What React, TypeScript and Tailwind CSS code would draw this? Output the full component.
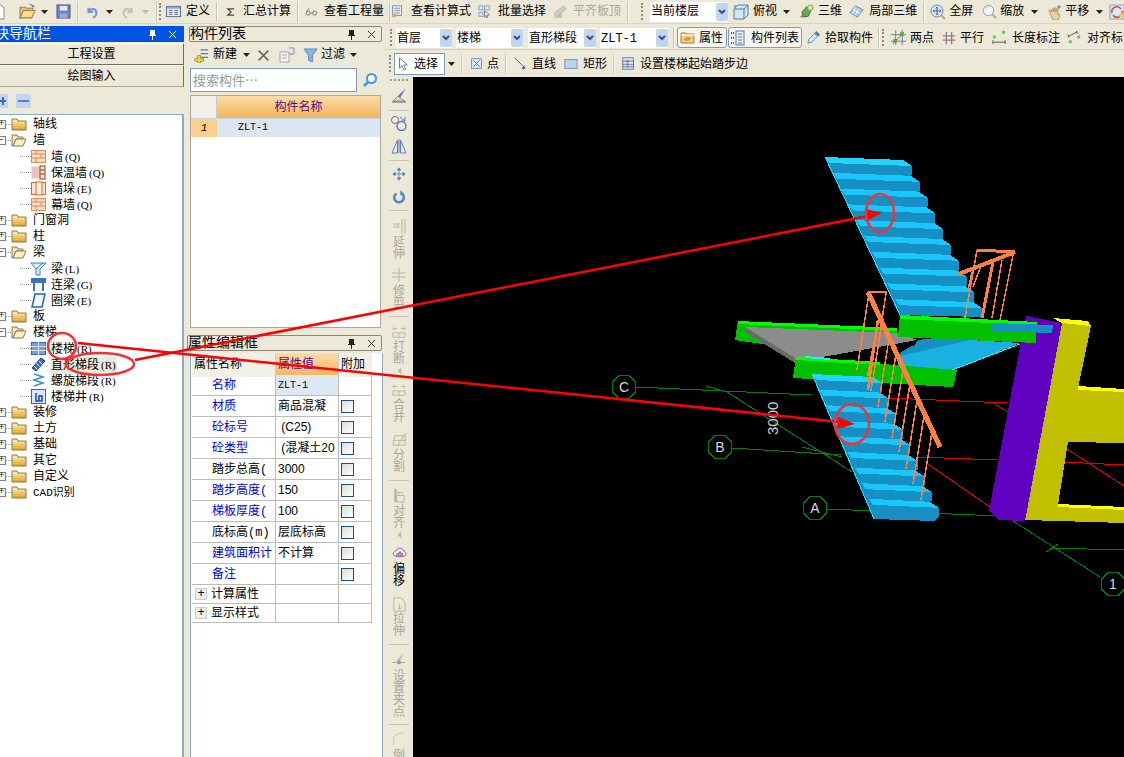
import React from 'react';

const F = "font-['Liberation_Mono','Noto_Sans_CJK_SC',monospace]";

// small toolbar pictures, all on a 16 grid
function Icon({ name, size = 16, className = '' }: { name: string; size?: number; className?: string }) {
  const p = { width: size, height: size, viewBox: '0 0 16 16', className: 'shrink-0 ' + className };
  switch (name) {
    case 'new':
      return <svg {...p}><path d="M3 1h7l3 3v11H3z" fill="#fff" stroke="#8a8a8a" /></svg>;
    case 'open':
      return <svg {...p}><path d="M1 4h5l1 1h6v2H5L2 14H1z" fill="#e8c878" stroke="#a08040" /><path d="M4 7h11l-3 7H1z" fill="#f6dc96" stroke="#a08040" /><path d="M10 1l4 2-2 1" fill="none" stroke="#4a8ad0" /></svg>;
    case 'save':
      return <svg {...p}><rect x="1" y="1" width="14" height="14" fill="#6f80c0" stroke="#4a5a98" /><rect x="4" y="2" width="8" height="5" fill="#e6e8f6" /><rect x="4" y="10" width="8" height="5" fill="#9aa6d8" /></svg>;
    case 'undo':
      return <svg {...p}><path d="M4 3v5h5M4 8c3-5 9-4 9 1 0 3-2 5-4 5" fill="none" stroke="#6e9ad8" strokeWidth="2.5" /></svg>;
    case 'redo':
      return <svg {...p}><path d="M12 3v5H7M12 8C9 3 3 4 3 9c0 3 2 5 4 5" fill="none" stroke="#c4c4ba" strokeWidth="2.5" /></svg>;
    case 'define':
      return <svg {...p}><rect x="0.5" y="2.5" width="15" height="11" fill="#e6ecf8" stroke="#4a6898" /><rect x="1" y="3" width="14" height="2" fill="#8aa6d0" /><path d="M3 7h4M3 9h4M3 11h4M9 7h4M9 9h4M9 11h4" stroke="#5a6a88" /></svg>;
    case 'sum':
      return <svg {...p}><path d="M13 3H3l5 5-5 5h10" fill="none" stroke="#444" strokeWidth="2" /></svg>;
    case 'glasses':
      return <svg {...p}><circle cx="4" cy="10" r="2.5" fill="none" stroke="#666" /><circle cx="12" cy="10" r="2.5" fill="none" stroke="#666" /><path d="M6.5 10h3M2 8l3-4" stroke="#666" fill="none" /></svg>;
    case 'formula':
      return <svg {...p}><rect x="2" y="1" width="11" height="12" fill="#e8eefa" stroke="#6a80a8" /><path d="M4 4h7M4 7h7M4 10h7" stroke="#6a80a8" /><rect x="1" y="11" width="5" height="4" fill="#e8a850" /></svg>;
    case 'batch':
      return <svg {...p}><path d="M1 1h5v5H1zM1 9h5v5H1zM8 1h6v5H8z" fill="#dde6f4" stroke="#7a94b8" /><path d="M8 7l6 5-3 .5 1 3-1.5.5-1-3-1.5 2z" fill="#fff" stroke="#666" /></svg>;
    case 'flat':
      return <svg {...p}><path d="M2 9l9-7 3 3-5 4v5H2z" fill="#cfcdc0" stroke="#bbb9ac" /><path d="M5 11h3v3H5z" fill="#bbb9ac" /></svg>;
    case 'cube':
      return <svg {...p}><path d="M1 5l4-4h10v10l-4 4H1z" fill="#cfe6f4" stroke="#5a7a98" /><path d="M1 5h10v10M11 5l4-4" fill="none" stroke="#5a7a98" /><path d="M1 1l4 0-4 4z" fill="#7ab0d8" /></svg>;
    case 'd3':
      return <svg {...p}><path d="M3 9l5-6 5 3-3 7-5 1z" fill="#58b060" stroke="#307038" /><circle cx="12" cy="4" r="3" fill="#d8e4a0" stroke="#909850" /><path d="M2 14l4-3" stroke="#c06040" strokeWidth="2" /></svg>;
    case 'part3d':
      return <svg {...p}><path d="M1 9l6-7 8 4-6 8z" fill="#a8c8e8" stroke="#6a90b8" /><path d="M4 6l8 4M7 3.5l-3 7M10 5l-3 7" stroke="#fff" /></svg>;
    case 'full':
      return <svg {...p}><circle cx="7" cy="7" r="6" fill="#dce6f6" stroke="#6a8ab8" /><path d="M7 3v8M3 7h8M7 3L6 4.500M7 3l1 1.500M7 11l-1-1.500M7 11l1-1.500M3 7l1.500-1M3 7l1.500 1M11 7l-1.500-1M11 7l-1.500 1" stroke="#4a68a8" fill="none" /><path d="M11 11l4 4" stroke="#d8a050" strokeWidth="2" /></svg>;
    case 'zoom':
      return <svg {...p}><circle cx="7" cy="7" r="5.500" fill="#f2f6fc" stroke="#8098b8" /><path d="M11 11l4 4" stroke="#c8a060" strokeWidth="2" /><path d="M4 5c1-2 3-2 4-2" stroke="#bcd0e8" fill="none" /></svg>;
    case 'hand':
      return <svg {...p}><path d="M3 9l-1-3 2 0 1 2V5h2v3-4h2v4-3h2v6l1-1 1 1-2 5H6z" fill="#e8d0a0" stroke="#b09868" /><path d="M12 1v4M10 3h4" stroke="#777" /></svg>;
    case 'orbit':
      return <svg {...p}><rect x="1" y="1" width="14" height="14" fill="#d8e8f4" stroke="#8aa8c0" /><path d="M3 9a5 5 0 0 1 9-4M13 7a5 5 0 0 1-9 4" fill="none" stroke="#e04838" strokeWidth="1.500" /><path d="M9 12l4-4 1 6z" fill="#e8d060" /></svg>;
    case 'attr':
      return <svg {...p}><path d="M1 3h5l1 1h7v9H1z" fill="#f2d080" stroke="#a08040" /><path d="M3 10l4-3 5 1-4 3z" fill="#c8a030" /><path d="M1 5h14" stroke="#fff" /></svg>;
    case 'list':
      return <svg {...p}><rect x="6" y="1" width="8" height="14" fill="#e8f0fa" stroke="#5a78a8" /><path d="M8 4h4M8 7h4M8 10h4M8 13h4" stroke="#5a78a8" /><path d="M1 3h3M1 8h3M1 13h3" stroke="#555" strokeWidth="2" strokeDasharray="1 1" /></svg>;
    case 'picker':
      return <svg {...p}><path d="M2 14l1-4 6-6 3 3-6 6z" fill="#dcecfa" stroke="#5a84b8" /><path d="M9 3l2-2 4 4-2 2z" fill="#4878b8" /></svg>;
    case 'two':
      return <svg {...p}><path d="M5 0v16M12 0v16M0 5h16M0 12h16" stroke="#6a7ab0" /><path d="M2 15L14 2" stroke="#e04040" /><rect x="9.500" y="2.500" width="4" height="4" fill="#50b050" /><rect x="2.500" y="9.500" width="4" height="4" fill="#50b050" /></svg>;
    case 'parallel':
      return <svg {...p}><path d="M5 1v14M11 1v14" stroke="#7080b0" strokeWidth="1.500" /><path d="M1 5.500h14M1 10.500h14" stroke="#c06868" strokeWidth="1.500" /></svg>;
    case 'len':
      return <svg {...p}><rect x="11" y="1" width="3" height="3" fill="#60c060" /><rect x="1" y="6" width="3" height="3" fill="#60c060" /><path d="M1 11v4M14 11v4M1 13h13" stroke="#555" /></svg>;
    case 'align':
      return <svg {...p}><rect x="11" y="6" width="3" height="3" fill="#60c060" /><rect x="2" y="11" width="3" height="3" fill="#60c060" /><path d="M1 7l10-5M1 5l1 3M10 1l1 3" stroke="#555" fill="none" /></svg>;
    case 'cursor':
      return <svg {...p}><path d="M4 1v12l3-3 2 5 2-1-2-5h4z" fill="#fff" stroke="#5a6a90" /></svg>;
    case 'point':
      return <svg {...p}><rect x="2" y="2" width="12" height="12" fill="#e0e4f4" stroke="#7080b0" /><path d="M4 4l8 8M12 4l-8 8" stroke="#d04040" /></svg>;
    case 'line':
      return <svg {...p}><path d="M1 1l12 12" stroke="#4a6a98" strokeWidth="1.200" /><path d="M9 14l5 1-1-5z" fill="#4a6a98" /></svg>;
    case 'rect':
      return <svg {...p}><rect x="1" y="3" width="14" height="10" fill="#bcd2f0" stroke="#6a88b8" /></svg>;
    case 'step':
      return <svg {...p}><rect x="1" y="1" width="13" height="14" fill="#dce8f8" stroke="#4a68a0" /><path d="M1 5h13M1 9h13M1 12h13" stroke="#4a68a0" /><path d="M7 13V4M5 6l2-2 2 2" fill="none" stroke="#d04030" /></svg>;
    case 'plusdoc':
      return <svg {...p}><path d="M7 2h8M7 6h8M7 10h8" stroke="#5a7ca8" strokeWidth="1.500" /><path d="M1 11h3V8h3v3h3v3H7v2H4v-2H1z" fill="#e8d060" stroke="#b09830" /></svg>;
    case 'x':
      return <svg {...p}><path d="M2 2l12 12M14 2L2 14" stroke="#6a6a6a" strokeWidth="2" /></svg>;
    case 'copy':
      return <svg {...p}><rect x="1" y="5" width="9" height="10" fill="#f4f4ee" stroke="#a8a8a8" /><path d="M3 8h5M3 11h5" stroke="#a8a8c8" /><path d="M10 1h5v6h-3M12 7l-2 0" stroke="#7090c0" fill="none" /></svg>;
    case 'funnel':
      return <svg {...p}><path d="M1 1h14L10 8v7l-4-2V8z" fill="#8ab4e8" stroke="#5a84b8" /></svg>;
    case 'search':
      return <svg {...p}><circle cx="9.500" cy="6.500" r="4.500" fill="#fff" stroke="#3a9ae0" strokeWidth="2" /><path d="M6 10l-4 4" stroke="#3a9ae0" strokeWidth="2.500" /></svg>;
    case 'brush':
      return <svg {...p}><path d="M15 1L7 9l2 2z" fill="#5a78b0" /><path d="M7 9l-5 5h12l-5-3z" fill="#e8d8c8" stroke="#a8907a" /><path d="M1 15h14" stroke="#4a68a0" /></svg>;
    case 'circles':
      return <svg {...p}><circle cx="4" cy="5" r="3.500" fill="#f4f4f4" stroke="#667" /><circle cx="10.500" cy="11" r="4.500" fill="none" stroke="#5a80b0" strokeWidth="1.500" /><path d="M9 2l5 4M14 2v4h-4" stroke="#5a80b0" fill="none" /></svg>;
    case 'mirror':
      return <svg {...p}><path d="M1 15L6.500 2v13zM15 15L9.500 2v13z" fill="none" stroke="#5a80c0" /><path d="M8 1v14" stroke="#5a80c0" /></svg>;
    case 'move':
      return <svg {...p}><path d="M8 1v14M1 8h14M8 1L6 3.500h4zM8 15l-2-2.500h4zM1 8l2.500-2v4zM15 8l-2.500-2v4z" fill="#5a84c0" stroke="#5a84c0" /></svg>;
    case 'rotate':
      return <svg {...p}><path d="M5 4a5.500 5.500 0 1 0 6 0" fill="none" stroke="#5a84d0" strokeWidth="3" /><path d="M10 0l-1 6 5-1z" fill="#5a84d0" /></svg>;
    case 'extend':
      return <svg {...p}><path d="M11 1v14M14 1v14M2 6h7M2 9h7" stroke="#b4b2a6" /><rect x="5" y="6" width="3" height="3" fill="#ccc" /></svg>;
    case 'trim':
      return <svg {...p}><path d="M8 1v14M1 6h14M1 10h14" stroke="#b4b2a6" /></svg>;
    case 'break':
      return <svg {...p}><path d="M1 9h14M1 14h14M1 9v5M15 9v5M8 9v5" stroke="#b4b2a6" fill="none" /><path d="M1 4h5M10 4h5M3 2L1 4l2 2M13 2l2 2-2 2" stroke="#b4b2a6" fill="none" /></svg>;
    case 'split':
      return <svg {...p}><path d="M1 14L3 4h11v10z" fill="none" stroke="#b4b2a6" /><path d="M1 9h13M15 1L6 14" stroke="#b4b2a6" /></svg>;
    case 'alignv':
      return <svg {...p}><path d="M3 1v14M13 15H5V8h8zM6 5h6M6 5l2-2M6 5l2 2" stroke="#b4b2a6" fill="none" /><rect x="3" y="1" width="2" height="14" fill="#b4b2a6" /></svg>;
    case 'offset':
      return <svg {...p}><path d="M2 11c-2-3 1-5 3-5 0-3 6-4 7 0 2 0 4 3 2 5-1 2-11 2-12 0z" fill="#f0eef8" stroke="#4a68c0" /><path d="M5 11c-1-2 1-2 2-2 0-2 3-2 3 0 2 0 2 1 1 2z" fill="#f09090" stroke="#d05050" /></svg>;
    case 'stretch':
      return <svg {...p}><path d="M2 1h8l4 5v9H2z" fill="none" stroke="#b4b2a6" /><path d="M8 7v6M6 11l2 2 2-2" stroke="#b4b2a6" fill="none" /></svg>;
    case 'grip':
      return <svg {...p}><path d="M14 1L6 9l2 2z" fill="#b4b2a6" /><path d="M1 12h5M10 12h5" stroke="#999" /><rect x="6" y="10" width="4" height="4" fill="#999" /></svg>;
    case 'corner':
      return <svg {...p}><path d="M2 15V7c0-3 3-5 12-6" fill="none" stroke="#c4c2b6" /></svg>;
    default:
      return <svg {...p} />;
  }
}

function Sep({ className = '' }: { className?: string }) {
  return <div className={'w-[2px] h-[20px] shrink-0 border-l border-[#c8c5b2] bg-white/60 ' + className} />;
}

function Grip({ className = '' }: { className?: string }) {
  return <div className={'w-[2px] h-[17px] shrink-0 border-l-2 border-dotted border-[#8a8a80] ' + className} />;
}

function Caret({ className = '', gray = false }: { className?: string; gray?: boolean }) {
  return (
    <svg width="7" height="4" viewBox="0 0 7 4" className={'shrink-0 ' + className}>
      <path d="M0 0h7L3.500 4z" fill={gray ? '#b8b6aa' : '#222'} />
    </svg>
  );
}

function Tool({ icon, label, size = 16, className = '', gap = 'gap-[5px]', gray = false }: { icon: string; label: string; size?: number; className?: string; gap?: string; gray?: boolean }) {
  return (
    <div className={'flex items-center shrink-0 ' + gap + ' ' + className}>
      <Icon name={icon} size={size} />
      <span className={'whitespace-nowrap ' + (gray ? 'text-[#a8a69a]' : 'text-black')}>{label}</span>
    </div>
  );
}

function Combo({ label, className = '' }: { label: string; className?: string }) {
  return (
    <div className={'h-[20px] shrink-0 bg-white flex items-center justify-between pl-[1px] ' + className}>
      <span className="whitespace-nowrap">{label}</span>
      <div className="w-[12px] h-[18px] bg-[#c3d4f2] rounded-[2px] flex items-center justify-center">
        <svg width="8" height="6" viewBox="0 0 8 6"><path d="M1 1l3 3 3-3" fill="none" stroke="#33517f" strokeWidth="2" /></svg>
      </div>
    </div>
  );
}

function TopBar() {
  return (
    <div className="h-[24px] shrink-0 flex items-center overflow-hidden border-b border-[#d8d5c4]">
      <Icon name="new" className="-ml-[9px]" />
      <Icon name="open" size={17} className="ml-[12px]" />
      <Caret className="ml-[5px]" />
      <Icon name="save" size={15} className="ml-[8px]" />
      <Sep className="ml-[6px]" />
      <Icon name="undo" size={14} className="ml-[6px]" />
      <Caret className="ml-[7px]" />
      <Icon name="redo" size={14} className="ml-[8px]" />
      <Caret gray className="ml-[7px]" />
      <Sep className="ml-[7px]" />
      <Grip className="ml-[1px]" />
      <Tool icon="define" label="定义" size={15} className="ml-[5px]" />
      <Sep className="ml-[6px]" />
      <Tool icon="sum" label="汇总计算" size={10} gap="gap-[7px]" className="ml-[8px]" />
      <Sep className="ml-[6px]" />
      <Tool icon="glasses" label="查看工程量" size={13} gap="gap-[6px]" className="ml-[6px]" />
      <Sep className="ml-[5px]" />
      <Tool icon="formula" label="查看计算式" size={13} gap="gap-[7px]" />
      <Tool icon="batch" label="批量选择" size={13} gap="gap-[7px]" className="ml-[7px]" />
      <Tool icon="flat" label="平齐板顶" size={15} gray className="ml-[7px]" />
      <Sep className="ml-[6px]" />
      <Grip className="ml-[12px]" />
      <Combo label="当前楼层" className="w-[78px] ml-[7px]" />
      <Tool icon="cube" label="俯视" gap="gap-[4px]" className="ml-[5px]" />
      <Caret className="ml-[6px]" />
      <Tool icon="d3" label="三维" size={15} gap="gap-[4px]" className="ml-[9px]" />
      <Tool icon="part3d" label="局部三维" size={15} className="ml-[7px]" />
      <Sep className="ml-[6px]" />
      <Tool icon="full" label="全屏" gap="gap-[3px]" className="ml-[5px]" />
      <Tool icon="zoom" label="缩放" size={15} gap="gap-[3px]" className="ml-[9px]" />
      <Caret className="ml-[7px]" />
      <Tool icon="hand" label="平移" gap="gap-[2px]" className="ml-[9px]" />
      <Caret className="ml-[7px]" />
      <Icon name="orbit" className="ml-[6px]" />
    </div>
  );
}

function TitleBar({ title, active = false, className = '' }: { title: string; active?: boolean; className?: string }) {
  return (
    <div className={'h-[16px] shrink-0 flex items-center overflow-hidden ' + (active ? 'bg-[#0054e3] text-white ' : 'border border-[#8a8878] rounded-[2px] text-black ') + className}>
      <span className="text-[14px] leading-[15px] whitespace-nowrap flex-1">{title}</span>
      <svg width="9" height="11" viewBox="0 0 9 11" className="shrink-0 mr-[11px]">
        <path d="M2 1h5v5h1v1H1V6h1zM4 7h1v4H4z" fill={active ? '#fff' : '#222'} />
      </svg>
      <svg width="9" height="9" viewBox="0 0 9 9" className="shrink-0 mr-[5px]">
        <path d="M1 1l7 7M8 1L1 8" stroke={active ? '#fff' : '#333'} />
      </svg>
    </div>
  );
}

function Folder({ open }: { open: boolean }) {
  return (
    <svg width="16" height="14" viewBox="0 0 16 14" className="shrink-0">
      <defs>
        <linearGradient id="fold" x1="0" y1="0" x2="0" y2="1">
          <stop offset="0" stopColor="#fff3c0" />
          <stop offset="1" stopColor="#e0a020" />
        </linearGradient>
      </defs>
      {open ? (
        <>
          <path d="M1 2h5l1 2h5v2H5l-3 7H1z" fill="#f4e4b0" stroke="#8a7a50" />
          <path d="M5 6h10l-3 7H2z" fill="#fbeec4" stroke="#8a7a50" />
        </>
      ) : (
        <path d="M1 2h5l1 2h8v9H1z" fill="url(#fold)" stroke="#8a7a50" />
      )}
    </svg>
  );
}

function TreeIcon({ kind }: { kind: string }) {
  const s = { width: 15, height: 15, viewBox: '0 0 15 15', className: 'shrink-0' };
  if (kind === 'brick')
    return <svg {...s}><rect x="0.5" y="1.500" width="14" height="12" fill="#f8dcc8" stroke="#e08850" /><path d="M0 5h15M0 9h15M5 1.500V5M10 5v4M5 9v4" stroke="#e08850" /></svg>;
  if (kind === 'warm')
    return <svg {...s}><rect x="0.500" y="1.500" width="9" height="12" fill="#e8c4bc" /><rect x="9" y="1" width="5" height="13" fill="#f4dcc8" stroke="#a04020" /><path d="M9 5h5M9 9h5" stroke="#a04020" /></svg>;
  if (kind === 'pier')
    return <svg {...s}><rect x="0.500" y="1.500" width="14" height="12" fill="#f8e4d0" stroke="#d06828" /><rect x="5" y="1" width="6" height="13" fill="#fff4e0" stroke="#d06828" /></svg>;
  if (kind === 'beam')
    return <svg {...s}><path d="M0 2h15L9 8v6H5V8z" fill="#d8ecfa" stroke="#3a80c0" /><path d="M5 8L12 2" stroke="#3a80c0" /></svg>;
  if (kind === 'link')
    return <svg {...s}><rect x="0" y="1" width="15" height="5" fill="#3a70c8" /><path d="M3 6v8M12 6v8" stroke="#3a70c8" strokeWidth="2" /></svg>;
  if (kind === 'ring')
    return <svg {...s}><path d="M4 1h10l-3 13H1z" fill="#f0f6fc" stroke="#2a60b0" strokeWidth="1.500" /></svg>;
  if (kind === 'stair')
    return <svg {...s}><rect x="0.500" y="1.500" width="14" height="12" fill="#7aa0d8" stroke="#3a68b0" /><path d="M0 5.500h15M0 9.500h15M7.500 1v13" stroke="#dce8f8" /></svg>;
  if (kind === 'straight')
    return <svg {...s}><path d="M1 11L10 1l4 3-9 10z" fill="#3a70d0" stroke="#1a3a90" /><path d="M3 9l3 3M5.500 6.500l3 3M8 4l3 3" stroke="#fff" /></svg>;
  if (kind === 'spiral')
    return <svg {...s}><path d="M3 1l9 3-9 3 9 3-9 3" fill="none" stroke="#3a90c8" strokeWidth="1.500" /></svg>;
  return <svg {...s}><rect x="0.500" y="0.500" width="14" height="14" fill="#d8e8f8" stroke="#3a68b0" /><path d="M5 4v8h6V7H8v5" fill="none" stroke="#1a48a0" strokeWidth="1.500" /></svg>;
}

const tree: { label: string; open?: boolean; children?: { label: string; key: string; kind: string; sel?: boolean }[] }[] = [
  { label: '轴线' },
  {
    label: '墙',
    open: true,
    children: [
      { label: '墙', key: '(Q)', kind: 'brick' },
      { label: '保温墙', key: '(Q)', kind: 'warm' },
      { label: '墙垛', key: '(E)', kind: 'pier' },
      { label: '幕墙', key: '(Q)', kind: 'brick' },
    ],
  },
  { label: '门窗洞' },
  { label: '柱' },
  {
    label: '梁',
    open: true,
    children: [
      { label: '梁', key: '(L)', kind: 'beam' },
      { label: '连梁', key: '(G)', kind: 'link' },
      { label: '圈梁', key: '(E)', kind: 'ring' },
    ],
  },
  { label: '板' },
  {
    label: '楼梯',
    open: true,
    children: [
      { label: '楼梯', key: '(R)', kind: 'stair' },
      { label: '直形梯段', key: '(R)', kind: 'straight', sel: true },
      { label: '螺旋梯段', key: '(R)', kind: 'spiral' },
      { label: '楼梯井', key: '(R)', kind: 'well' },
    ],
  },
  { label: '装修' },
  { label: '土方' },
  { label: '基础' },
  { label: '其它' },
  { label: '自定义' },
  { label: 'CAD识别' },
];

function Expander({ open }: { open: boolean }) {
  return (
    <div className="w-[9px] h-[9px] shrink-0 -ml-[3px] border border-[#808080] bg-white flex items-center justify-center text-[9px] leading-[7px] text-black">
      {open ? '-' : '+'}
    </div>
  );
}

function NavPanel() {
  return (
    <div className="w-[184px] shrink-0 flex flex-col min-h-0">
      <TitleBar title="块导航栏" active className="pr-[2px] [&>span]:-ml-[5px]" />
      <div className="mt-[1px] h-[22px] shrink-0 pt-[2px] border border-l-0 border-t-white border-r-[#716f64] border-b-[#716f64] flex items-center justify-center text-[12px]">工程设置</div>
      <div className="h-[22px] shrink-0 pt-[2px] border border-l-0 border-t-white border-r-[#716f64] border-b-[#aca899] flex items-center justify-center text-[12px]">绘图输入</div>
      <div className="h-[27px] shrink-0 flex items-center">
        <div className="w-[11px] h-[14px] -ml-[3px] bg-[#c3d4f2] flex items-center justify-center relative">
          <div className="w-[7px] h-[2px] bg-[#3a70b8]" />
          <div className="w-[2px] h-[8px] bg-[#3a70b8] absolute" />
        </div>
        <div className="w-[15px] h-[14px] ml-[8px] bg-[#c3d4f2] flex items-center justify-center">
          <div className="w-[11px] h-[2px] bg-[#5a80b8]" />
        </div>
      </div>
      <div className="flex-1 min-h-0 bg-white border-t border-r-2 border-[#8fa8c4] pt-[1px] overflow-hidden">
        {tree.map((n) => (
          <div key={n.label}>
            <div className="h-[16px] flex items-center">
              <Expander open={!!n.open} />
              <div className="w-[5px] shrink-0 border-t border-dotted border-[#999]" />
              <Folder open={!!n.open} />
              <span className={'ml-[6px] leading-[16px] translate-y-[1px] ' + (n.label === 'CAD识别' ? 'text-[11px]' : '')}>{n.label}</span>
            </div>
            {n.children?.map((c) => (
              <div key={c.label} className="h-[16px] flex items-center pl-[20px]">
                <div className="w-[11px] shrink-0 border-t border-dotted border-[#999]" />
                <TreeIcon kind={c.kind} />
                <span className={'ml-[4px] px-[1px] leading-[16px] translate-y-[1px] whitespace-nowrap ' + (c.sel ? 'bg-[#ece9d8]' : '')}>
                  {c.label}
                  <span className="ml-[2px] text-[11px] font-['Liberation_Serif',serif]">{c.key}</span>
                </span>
              </div>
            ))}
          </div>
        ))}
      </div>
    </div>
  );
}

const props: { name: string; value: string; blue: boolean; check: boolean; mono?: boolean }[] = [
  { name: '名称', value: 'ZLT-1', blue: true, check: false, mono: true },
  { name: '材质', value: '商品混凝', blue: true, check: true },
  { name: '砼标号', value: ' (C25)', blue: true, check: true },
  { name: '砼类型', value: ' (混凝土20', blue: true, check: true },
  { name: '踏步总高(', value: '3000', blue: false, check: true },
  { name: '踏步高度(', value: '150', blue: true, check: true },
  { name: '梯板厚度(', value: '100', blue: true, check: true },
  { name: '底标高(m)', value: '层底标高', blue: false, check: true },
  { name: '建筑面积计', value: '不计算', blue: true, check: true },
  { name: '备注', value: '', blue: true, check: true },
];

function MiddlePanel() {
  return (
    <div className="w-[196px] shrink-0 ml-[3px] flex flex-col min-h-0">
      <TitleBar title="构件列表" className="ml-[2px] mr-[1px]" />
      <div className="h-[26px] shrink-0 flex items-center pl-[7px]">
        <Tool icon="plusdoc" label="新建" size={15} className="" gap="gap-[4px]" />
        <Caret className="ml-[6px]" />
        <Icon name="x" size={13} className="ml-[7px]" />
        <Icon name="copy" className="ml-[9px]" />
        <Icon name="funnel" size={15} className="ml-[8px]" />
        <span className="ml-[3px]">过滤</span>
        <Caret className="ml-[5px]" />
      </div>
      <div className="h-[24px] shrink-0 flex items-center ml-[3px]">
        <div className="w-[167px] h-[24px] bg-white border border-[#7f9db9] text-[#999] text-[13px] leading-[22px] pl-[2px] whitespace-nowrap font-['Noto_Sans_CJK_SC',sans-serif]">搜索构件…</div>
        <Icon name="search" className="ml-[5px]" />
      </div>
      <div className="h-[233px] shrink-0 mt-[3px] ml-[3px] mr-[2px] bg-white border border-[#aca899]">
        <div className="grid grid-cols-[26px_1fr] h-[22px]">
          <div className="bg-[#f2f0e6] border-r border-[#ccc]" />
          <div className="bg-gradient-to-b from-[#fbdca8] to-[#f2b45c] flex items-center justify-center text-[#5a0a80] pt-[2px]">构件名称</div>
        </div>
        <div className="grid grid-cols-[26px_1fr] h-[19px] border-t border-[#c8d4e4]">
          <div className="bg-[#fbd08c] flex items-center justify-center italic text-[11px]">1</div>
          <div className="bg-[#dce6f2] flex items-center pl-[21px] text-[10px]">ZLT-1</div>
        </div>
      </div>
      <TitleBar title="属性编辑框" className="mt-[7px] mr-[1px]" />
      <div className="flex-1 min-h-0 mt-[2px] ml-[3px] bg-white border-l border-r border-[#8fa8c4]">
        <div className="w-[180px] ml-[1px] grid grid-cols-[84px_63px_33px] h-[22px] leading-[24px] border-b border-[#bbb]">
          <div className="bg-[#f2f0e6] pl-[2px] border-r border-[#ccc]">属性名称</div>
          <div className="bg-gradient-to-b from-[#fbdca8] to-[#f2b45c] text-[#5a0a80] pl-[2px] border-r border-[#ccc]">属性值</div>
          <div className="bg-[#f2f0e6] pl-[2px]">附加</div>
        </div>
        {props.map((r) => (
          <div key={r.name} className="w-[180px] ml-[1px] grid grid-cols-[84px_63px_33px] h-[21px] border-b border-[#bbb]">
            <div className={'pl-[20px] border-r border-[#bbb] leading-[22px] whitespace-nowrap overflow-hidden ' + (r.blue ? 'text-[#0000e0]' : 'text-black')}>{r.name}</div>
            <div className={'pl-[2px] border-r border-[#bbb] leading-[21px] whitespace-pre overflow-hidden ' + (r.mono ? 'bg-[#dee7f4] text-[10px]' : "font-['Liberation_Sans','Noto_Sans_CJK_SC',sans-serif]")}>{r.value}</div>
            <div className="flex items-center pl-[2px] border-r border-[#bbb]">
              {r.check && <div className="w-[13px] h-[13px] border border-[#1c5180] bg-gradient-to-br from-[#dcdcd6] to-white" />}
            </div>
          </div>
        ))}
        {['计算属性', '显示样式'].map((g) => (
          <div key={g} className="w-[180px] ml-[1px] grid grid-cols-[84px_63px_33px] h-[19px] border-b border-[#bbb]">
            <div className="flex items-center pl-[3px] border-r border-[#bbb] gap-[4px]">
              <div className="w-[12px] h-[12px] bg-[#eeeeea] border border-[#ccc] flex items-center justify-center text-[12px] leading-[10px]">+</div>
              <span className="translate-y-[1px]">{g}</span>
            </div>
            <div className="border-r border-[#bbb]" />
            <div className="border-r border-[#bbb]" />
          </div>
        ))}
      </div>
    </div>
  );
}

function DrawRows() {
  return (
    <>
      <div className="h-[24px] shrink-0 flex items-center border-b border-[#d2cfbc] [&_span]:translate-y-[1px]">
        <Grip className="ml-[5px]" />
        <Combo label="首层" className="w-[56px] ml-[4px]" />
        <Combo label="楼梯" className="w-[67px] ml-[4px]" />
        <Combo label="直形梯段" className="w-[68px] ml-[5px]" />
        <Combo label="ZLT-1" className="w-[68px] ml-[4px]" />
        <Sep className="ml-[5px]" />
        <div className="h-[21px] w-[50px] shrink-0 ml-[2px] border border-[#7f9db9] rounded-[3px] bg-[#f6f5ee] flex items-center pl-[2px]">
          <Icon name="attr" />
          <span className="ml-[3px]">属性</span>
        </div>
        <div className="h-[21px] w-[74px] shrink-0 ml-[1px] border border-[#7f9db9] rounded-[3px] bg-[#f6f5ee] flex items-center pl-[1px]">
          <Icon name="list" />
          <span className="ml-[5px] whitespace-nowrap">构件列表</span>
        </div>
        <Tool icon="picker" label="拾取构件" size={15} gap="gap-[4px]" className="ml-[4px]" />
        <Sep className="ml-[5px]" />
        <Grip className="ml-[2px]" />
        <Tool icon="two" label="两点" size={15} gap="gap-[4px]" className="ml-[7px]" />
        <Tool icon="parallel" label="平行" size={14} gap="gap-[4px]" className="ml-[8px]" />
        <Tool icon="len" label="长度标注" size={15} className="ml-[8px]" />
        <Tool icon="align" label="对齐标注" size={15} className="ml-[7px]" />
      </div>
      <div className="h-[27px] shrink-0 flex items-center [&_span]:translate-y-[1px]">
        <Grip className="ml-[4px]" />
        <div className="h-[22px] w-[51px] shrink-0 ml-[3px] bg-white border border-[#7f9db9] flex items-center pl-[1px] gap-[4px]">
          <Icon name="cursor" size={14} />
          <span>选择</span>
        </div>
        <Caret className="ml-[3px]" />
        <Sep className="ml-[6px]" />
        <Tool icon="point" label="点" size={13} gap="gap-[4px]" className="ml-[7px]" />
        <Sep className="ml-[6px]" />
        <Tool icon="line" label="直线" size={13} className="ml-[7px]" />
        <Tool icon="rect" label="矩形" size={14} className="ml-[8px]" />
        <Sep className="ml-[6px]" />
        <Tool icon="step" label="设置楼梯起始踏步边" size={13} gap="gap-[5px]" className="ml-[7px]" />
      </div>
    </>
  );
}

function VText({ t, className = '' }: { t: string; className?: string }) {
  return <div className={'w-[14px] text-center break-all leading-[12px] text-[#a8a69a] shrink-0 ' + className}>{t}</div>;
}

function HSep({ className = '' }: { className?: string }) {
  return <div className={'w-[20px] h-[1px] bg-[#c8c5b2] shrink-0 ' + className} />;
}

function SideBar() {
  return (
    <div className="w-[28px] shrink-0 flex flex-col items-center overflow-hidden">
      <div className="w-[18px] mt-[2px] border-t-2 border-dotted border-[#999] shrink-0" />
      <Icon name="brush" className="mt-[6px]" />
      <HSep className="mt-[7px]" />
      <Icon name="circles" className="mt-[4px]" />
      <Icon name="mirror" className="mt-[7px]" />
      <HSep className="mt-[6px]" />
      <Icon name="move" size={14} className="mt-[6px]" />
      <Icon name="rotate" size={14} className="mt-[9px]" />
      <HSep className="mt-[6px]" />
      <Icon name="extend" className="mt-[7px]" />
      <VText t="延伸" className="mt-[3px]" />
      <Icon name="trim" className="mt-[6px]" />
      <VText t="修剪" className="mt-[3px]" />
      <HSep className="mt-[6px]" />
      <Icon name="break" size={14} className="mt-[8px]" />
      <VText t="打断" className="mt-[3px]" />
      <Caret gray className="mt-[3px] rotate-90" />
      <Icon name="break" size={14} className="mt-[10px]" />
      <VText t="合并" className="mt-[3px]" />
      <Icon name="split" size={15} className="mt-[8px]" />
      <VText t="分割" className="mt-[3px]" />
      <HSep className="mt-[6px]" />
      <Icon name="alignv" size={15} className="mt-[7px]" />
      <VText t="对齐" className="mt-[3px]" />
      <Caret gray className="mt-[3px] rotate-90" />
      <Icon name="offset" size={15} className="mt-[8px]" />
      <VText t="偏移" className="mt-[4px] !text-black" />
      <Icon name="stretch" size={15} className="mt-[9px]" />
      <VText t="拉伸" className="mt-[2px]" />
      <HSep className="mt-[6px]" />
      <Icon name="grip" size={14} className="mt-[7px]" />
      <VText t="设置夹点" className="mt-[5px]" />
      <HSep className="mt-[5px]" />
      <Icon name="corner" size={14} className="mt-[7px]" />
      <VText t="例" className="mt-[4px]" />
    </div>
  );
}

const pts = (a: number[][]) => a.map((q) => q.join(',')).join(' ');

function Stair({ x, y, w, slope, dx, dy, n, end }: { x: number; y: number; w: number; slope: number; dx: number; dy: number; n: number; end: number[][] }) {
  const L = (i: number) => [x + dx * i, y + dy * i];
  const R = (i: number) => [x + w + dx * i, y + slope + dy * i];
  const outline: number[][] = [L(0)];
  for (let i = 0; i < n; i++) {
    const r = R(i);
    outline.push(r, [r[0] + 9, r[1] + 6], [r[0] + 9, r[1] + dy - 1]);
  }
  outline.push(...end);
  return (
    <>
      <polygon points={pts(outline)} fill="#1690c2" />
      {Array.from({ length: n }).map((_, i) => {
        const l = L(i);
        const r = R(i);
        return (
          <polygon
            key={i}
            points={pts([l, r, [r[0] + 9, r[1] + 6], [l[0] + 4, l[1] + 6]])}
            fill={i === 0 ? '#22d4ff' : '#1ac6ff'}
          />
        );
      })}
      <line x1={x} y1={y} x2={end[end.length - 1][0]} y2={end[end.length - 1][1]} stroke="#22e0ff" />
    </>
  );
}

const lowerRail = [
  [871, 391],
  [878, 407],
  [885, 422],
  [892, 438],
  [899, 452],
  [906, 469],
  [913, 484],
  [921, 500],
];

function Bubble({ x, y, t }: { x: number; y: number; t: string }) {
  const c = Array.from({ length: 8 }).map((_, i) => {
    const a = (Math.PI / 4) * i + Math.PI / 8;
    return [x + 12.5 * Math.cos(a), y + 12.5 * Math.sin(a)];
  });
  return (
    <>
      <polygon points={pts(c)} fill="none" stroke="#008000" />
      <text x={x} y={y + 5} textAnchor="middle" fontSize="14" fill="#d8d8d8" fontFamily="Liberation Sans, sans-serif">{t}</text>
    </>
  );
}

function Canvas() {
  return (
    <div className="flex-1 min-w-0 bg-black">
      <svg viewBox="413 77 711 680" className="block w-[711px] h-[680px]" shapeRendering="crispEdges">
        {/* axis lines */}
        <g stroke="#008000" fill="none">
          <path d="M636 387L812 395M706 386L727 392L852 472M732 448L842 455M802 447L842 457M827 509L1000 516M1013 521L1100 577M1050 548L1124 550M1046 552L1058 544" />
        </g>
        <g stroke="#e00000" fill="none">
          <path d="M887 398L1008 403M993 403L1008 412M917 457L998 460M925 462L990 507M1067 449L1124 486M1063 462L1124 465" />
        </g>
        <Bubble x={624} y={387} t="C" />
        <Bubble x={720} y={447} t="B" />
        <Bubble x={815} y={508} t="A" />
        <Bubble x={1113} y={584} t="1" />
        <text transform="translate(778 435) rotate(-90)" fontSize="15" fill="#d0d0d0" fontFamily="Liberation Sans, sans-serif">3000</text>

        {/* columns */}
        <polygon points="1078,388 1124,391 1124,443 1068,442 1058,505 1124,508 1124,523 1025,520 1062,323 1091,326" fill="#c0c000" />
        <polygon points="1078,386 1124,389 1124,392 1078,390" fill="#ffff00" />
        <polygon points="1058,504 1124,507 1124,510 1058,507" fill="#ffff00" />
        <polygon points="1053,318 1088,321 1091,326 1062,323" fill="#ffff00" />
        <polygon points="1026,316 1062,323 1025,521 998,520 989,511" fill="#6000c0" />

        {/* landing and the flight behind it */}
        <polygon points="738,321 897,328 898,340 762,344 735,340" fill="#00c000" />
        <polygon points="738,321 897,328 897,331 738,324" fill="#00ff00" />
        <polygon points="745,327 897,333 917,340 795,362" fill="#8c8c8c" />
        <polygon points="745,327 795,358 795,363 745,332" fill="#6a6a6a" />
        <polygon points="900,353 970,340 1020,343 947,372 897,370" fill="#1ab0e0" />
        <polygon points="900,353 905,350 910,347 915,345 918,340 935,338 970,340 900,356" fill="#1690c2" />
        <line x1="947" y1="372" x2="1020" y2="344" stroke="#22f0ff" />

        <Stair x={825} y={157} w={78} slope={3} dx={7.8} dy={15.8} n={10} end={[[982, 317], [900, 315]]} />

        {/* upper rail */}
        <g stroke="#ff8040" fill="none">
          <path d="M965 318L977 250M968 290L972 272M973 287L980 268M992 318L1002 260M1000 320L1013 255" strokeWidth="1.500" />
          <path d="M982 318L993 262" strokeWidth="3" />
          <path d="M959 274L1015 252" strokeWidth="4" />
          <path d="M977 250L1015 252" strokeWidth="3" />
        </g>

        {/* upper landing */}
        <polygon points="900,315 1037,322 1036,343 898,337" fill="#00c000" />
        <polygon points="900,315 1037,322 1037,325 900,319" fill="#00ff00" />
        <polygon points="992,323 1053,325 1052,333 992,331" fill="#1690c2" />

        {/* lower landing */}
        <polygon points="796,357 957,370 953,387 793,378" fill="#00c000" />
        <polygon points="796,357 880,362 880,365 796,360" fill="#00ff00" />
        <polygon points="805,356 830,358 830,360 805,358" fill="#22f0ff" />

        <Stair x={812} y={374} w={61} slope={3} dx={7.1} dy={15.6} n={9} end={[[935, 521], [874, 519]]} />

        {/* lower rail */}
        <g stroke="#ff8040" fill="none" strokeWidth="1.500">
          {lowerRail.map(([x, y]) => {
            const t = (y - (292 + (x - 868) * 2.153)) / (62 + 21.5);
            return <line key={x} x1={x} y1={y} x2={x + 10 * t} y2={y - 62 * t} />;
          })}
          <path d="M868 292L887 292M869 293L857 370M886 293L879 340" />
          <path d="M868 292L940 447" strokeWidth="5" />
          <path d="M878 320L868 390M874 345L868 376" strokeWidth="2.500" />
        </g>
      </svg>
    </div>
  );
}

function Overlay() {
  return (
    <svg viewBox="0 0 1124 757" className="absolute inset-0 w-[1124px] h-[757px] pointer-events-none">
      <line x1="135" y1="360" x2="868" y2="216" stroke="#ff0000" strokeWidth="2.500" />
      <polygon points="882,213 866,209 868,220" fill="#ff0000" />
      <line x1="78" y1="343" x2="840" y2="422" stroke="#ff0000" strokeWidth="2.500" />
      <polygon points="855,424 838,417 837,429" fill="#ff0000" />
      <g fill="none" stroke="#ee3338" strokeWidth="2.500">
        <ellipse cx="62" cy="346" rx="14" ry="13" />
        <ellipse cx="100" cy="364" rx="34" ry="11" />
        <ellipse cx="880" cy="213" rx="14" ry="19" />
        <ellipse cx="852" cy="424" rx="17" ry="20" />
      </g>
    </svg>
  );
}

export default function App() {
  return (
    <div className={'relative w-[1124px] h-[757px] overflow-hidden bg-[#ece9d8] text-black text-[12px] leading-[14px] flex flex-col ' + F}>
      <TopBar />
      <div className="flex-1 min-h-0 flex pt-[2px]">
        <NavPanel />
        <MiddlePanel />
        <div className="w-[739px] shrink-0 ml-[2px] flex flex-col min-h-0 overflow-hidden">
          <DrawRows />
          <div className="flex-1 min-h-0 flex">
            <SideBar />
            <Canvas />
          </div>
        </div>
      </div>
      <Overlay />
    </div>
  );
}
